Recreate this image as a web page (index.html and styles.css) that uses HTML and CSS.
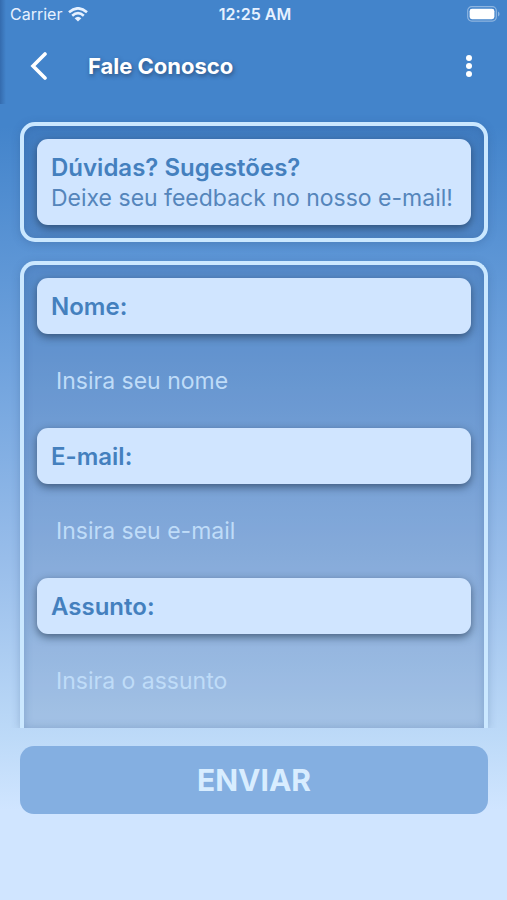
FILE: index.html
```html
<!DOCTYPE html>
<html lang="pt-BR">
<head>
<meta charset="utf-8">
<meta name="viewport" content="width=device-width, initial-scale=1">
<title>Fale Conosco</title>
<link rel="stylesheet" href="styles.css">
</head>
<body>
<div class="top">
<div class="status">
  <div class="carrier">
    <span>Carrier</span>
    <svg width="20" height="15" viewBox="0 0 20 15" aria-hidden="true">
      <g fill="none" stroke="currentColor" stroke-width="2.6">
        <path d="M1 5.2Q10-2.6 19 5.2"/>
        <path d="M4.2 8.8Q10 3.6 15.8 8.8"/>
      </g>
      <path d="M6.6 11.2Q10 8.2 13.4 11.2L10 14.6Z" fill="currentColor"/>
    </svg>
  </div>
  <span class="clock">12:25 AM</span>
  <svg class="battery" width="33" height="16" viewBox="0 0 33 16" aria-hidden="true">
    <rect x="0.7" y="0.7" width="28.6" height="14.4" rx="4" fill="none" stroke="#fff" stroke-opacity=".4" stroke-width="1.2"/>
    <rect x="2.6" y="2.8" width="24.8" height="10.4" rx="2.4" fill="#fff"/>
    <path d="M31 5.6Q32.6 6.2 32.6 8T31 10.4Z" fill="#fff" fill-opacity=".4"/>
  </svg>
</div>
<header class="bar">
  <button class="icon" type="button" aria-label="Voltar">
    <svg width="18" height="30" viewBox="0 0 18 30"><path d="M16 3L4 15L16 27" fill="none" stroke="currentColor" stroke-width="3.6" stroke-linecap="round" stroke-linejoin="miter"/></svg>
  </button>
  <h1>Fale Conosco</h1>
  <button class="icon" type="button" aria-label="Menu">
    <svg width="8" height="24" viewBox="0 0 8 24" fill="currentColor"><circle cx="4" cy="4" r="3"/><circle cx="4" cy="12" r="3"/><circle cx="4" cy="20" r="3"/></svg>
  </button>
</header>
</div>
<main class="content">
  <section class="card">
    <div class="pill">
      <h2>Dúvidas? Sugestões?</h2>
      <p>Deixe seu feedback no nosso e-mail!</p>
    </div>
  </section>
  <form class="card fields" id="contato">
    <label class="pill" for="nome">Nome:</label>
    <input id="nome" type="text" placeholder="Insira seu nome">
    <label class="pill" for="email">E-mail:</label>
    <input id="email" type="email" placeholder="Insira seu e-mail">
    <label class="pill" for="assunto">Assunto:</label>
    <input id="assunto" type="text" placeholder="Insira o assunto">
  </form>
</main>
<footer class="actions">
  <button class="send" type="submit" form="contato">ENVIAR</button>
</footer>
</body>
</html>
```
FILE: styles.css
```css
* { box-sizing: border-box; }

body {
  margin: 0;
  min-height: 100vh;
  display: flex;
  flex-direction: column;
  font-family: Inter, "Liberation Sans", sans-serif;
  color: #fff;
  background: linear-gradient(#4384cb 14%, #6fa2dd 40%, #98bdea 62%, #bddaf8 82%, #d0e5ff 90%);
}

h1, h2, p { margin: 0; }

button { border: 0; font: inherit; color: inherit; }

.top { background: linear-gradient(90deg, rgba(30, 70, 130, 0.4), transparent 6px); }

.status {
  display: grid;
  grid-template-columns: 1fr auto 1fr;
  align-items: center;
  height: 28px;
  padding: 0 7px 0 10px;
  font-size: 16px;
}

.carrier {
  display: flex;
  align-items: center;
  gap: 6px;
  color: #e6f1ff;
}

.clock { font-weight: 600; color: #e6f1ff; }

.battery { justify-self: end; }

.bar {
  display: flex;
  align-items: center;
  height: 76px;
  padding: 0 29px;
}

.bar h1 {
  flex: 1;
  margin-left: 41px;
  font-size: 22px;
  line-height: 28px;
  font-weight: 700;
  text-shadow: 1px 2px 4px rgba(30, 50, 80, 0.6);
}

.icon {
  display: flex;
  padding: 0;
  background: none;
}

.bar .icon:last-child { margin-right: 5px; }

.content {
  flex: 1;
  display: flex;
  flex-direction: column;
  gap: 19px;
  padding: 18px 19px 0 20px;
  overflow: hidden;
}

.card {
  padding: 13px;
  border: 4px solid #cbe8ff;
  border-radius: 15px;
  background: rgba(45, 85, 140, 0.17);
  box-shadow: 0 2px 8px rgba(40, 70, 120, 0.25), inset 0 0 8px rgba(40, 80, 130, 0.25);
}

.fields {
  flex: 1;
  display: flex;
  flex-direction: column;
  padding-bottom: 0;
  border-bottom: 0;
  border-radius: 15px 15px 0 0;
}

.pill {
  display: block;
  padding: 14px 14px 12px;
  border-radius: 11px;
  background: #d0e5ff;
  color: #4480be;
  font-size: 24px;
  line-height: 30px;
  font-weight: 600;
  box-shadow: 0 3px 8px rgba(30, 50, 75, 0.65);
}

.pill h2 { font: inherit; }

.pill p { font-size: 23px; font-weight: 400; color: #5585bb; }

.fields input {
  width: 100%;
  height: 94px;
  padding: 0 19px;
  border: 0;
  outline: 0;
  background: none;
  font: 23px Inter, "Liberation Sans", sans-serif;
  color: #cbe5fc;
}

.fields input::placeholder { color: #bfdcf8; opacity: 1; }

.actions { padding: 18px 19px 86px 20px; }

.send {
  display: block;
  width: 100%;
  height: 68px;
  border-radius: 14px;
  background: #84afe1;
  color: #d8edff;
  font-size: 30px;
  font-weight: 700;
}
```
